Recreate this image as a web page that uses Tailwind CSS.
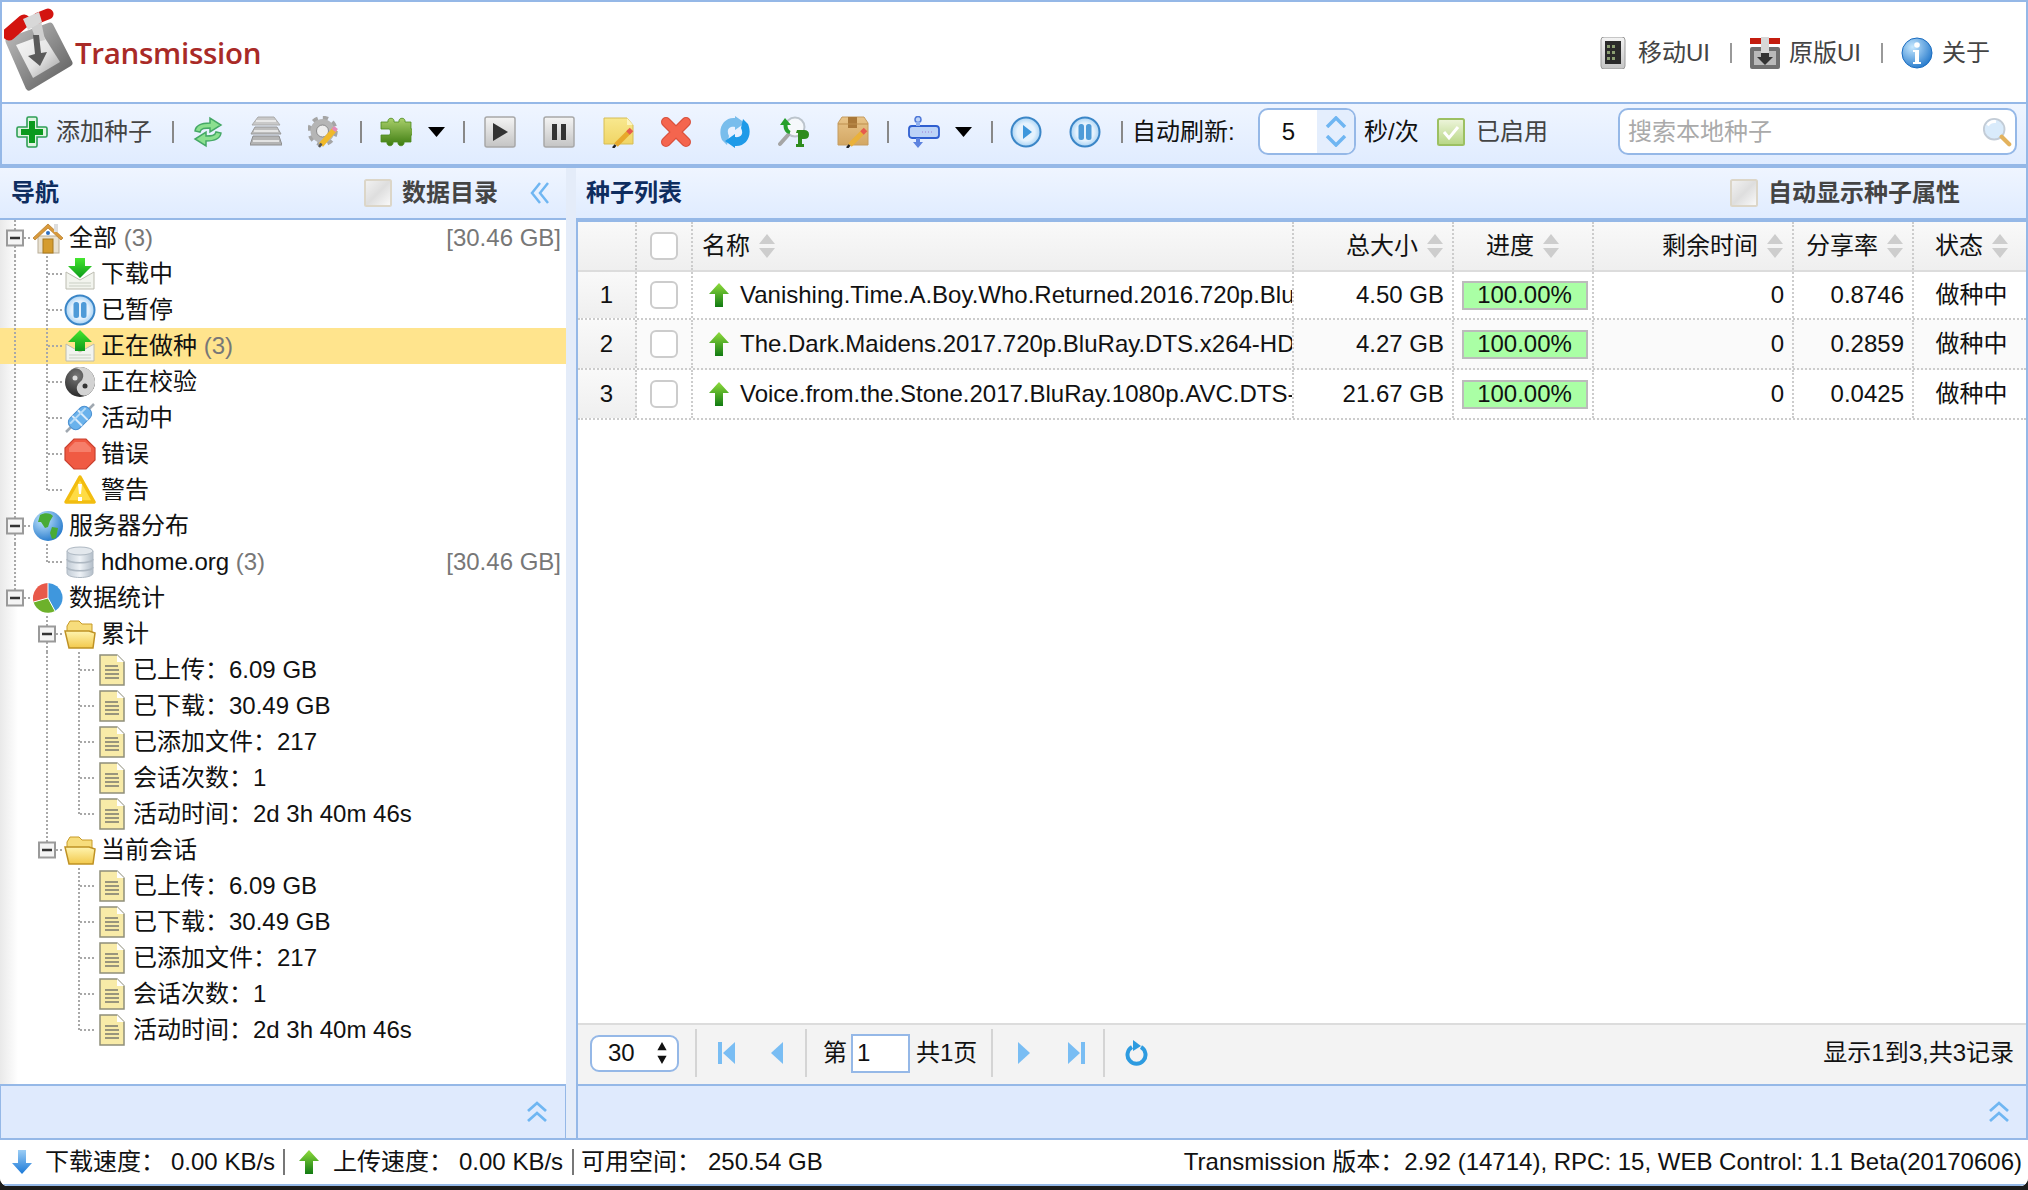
<!DOCTYPE html>
<html lang="zh-CN">
<head>
<meta charset="utf-8">
<title>Transmission</title>
<script src="https://cdn.jsdelivr.net/npm/@tailwindcss/browser@4"></script>
</head>
<body class="w-[2028px] h-[1190px] overflow-hidden whitespace-nowrap bg-[#1c1c1c] text-[24px] leading-none text-[#111] font-['Liberation_Sans','Noto_Sans_CJK_SC',sans-serif]">
<svg class="absolute w-0 h-0" aria-hidden="true">
<defs>
<linearGradient id="gGrey" x1="0" y1="0" x2="0" y2="1"><stop offset="0" stop-color="#f4f4f4"/><stop offset="1" stop-color="#c4c4c4"/></linearGradient>
<linearGradient id="gGreen" x1="0" y1="0" x2="0" y2="1"><stop offset="0" stop-color="#45e62f"/><stop offset="1" stop-color="#0d9a1a"/></linearGradient>
<linearGradient id="gUp" x1="0" y1="0" x2="0" y2="1"><stop offset="0" stop-color="#8fdc3c"/><stop offset="1" stop-color="#117a12"/></linearGradient>
<linearGradient id="gDown" x1="0" y1="0" x2="0" y2="1"><stop offset="0" stop-color="#9ccdf5"/><stop offset="1" stop-color="#1b79d8"/></linearGradient>
<linearGradient id="gPuzzle" x1="0" y1="0" x2="0" y2="1"><stop offset="0" stop-color="#a9cf6b"/><stop offset="1" stop-color="#3d7c10"/></linearGradient>
<linearGradient id="gBox" x1="0" y1="0" x2="0" y2="1"><stop offset="0" stop-color="#e8c489"/><stop offset="1" stop-color="#d3a764"/></linearGradient>
<linearGradient id="gNote" x1="0" y1="0" x2="0" y2="1"><stop offset="0" stop-color="#f8e88e"/><stop offset="1" stop-color="#f0d566"/></linearGradient>
<linearGradient id="gFolder" x1="0" y1="0" x2="0" y2="1"><stop offset="0" stop-color="#fff4b0"/><stop offset="1" stop-color="#f2c94c"/></linearGradient>
<linearGradient id="gDb" x1="0" y1="0" x2="1" y2="0"><stop offset="0" stop-color="#c2ccd6"/><stop offset="0.5" stop-color="#eef2f6"/><stop offset="1" stop-color="#b3bec9"/></linearGradient>
<linearGradient id="gMetal" x1="0" y1="0" x2="1" y2="1"><stop offset="0" stop-color="#f7f7f7"/><stop offset="0.55" stop-color="#e4e4e4"/><stop offset="1" stop-color="#9c9c9c"/></linearGradient>
<linearGradient id="gFrame" x1="0" y1="0" x2="1" y2="1"><stop offset="0" stop-color="#bcbcbc"/><stop offset="1" stop-color="#5d5d5d"/></linearGradient>
<linearGradient id="gCheck" x1="0" y1="0" x2="1" y2="1"><stop offset="0" stop-color="#f3f3f3"/><stop offset="0.5" stop-color="#dedede"/><stop offset="1" stop-color="#fbfbfb"/></linearGradient>
<linearGradient id="gChecked" x1="0" y1="0" x2="0" y2="1"><stop offset="0" stop-color="#eef5dc"/><stop offset="1" stop-color="#b7d684"/></linearGradient>
<radialGradient id="gGlobe" cx="0.35" cy="0.3" r="0.8"><stop offset="0" stop-color="#c6e8ff"/><stop offset="1" stop-color="#1a72c8"/></radialGradient>
<radialGradient id="gYin" cx="0.4" cy="0.3" r="0.8"><stop offset="0" stop-color="#777"/><stop offset="1" stop-color="#1e1e1e"/></radialGradient>
<radialGradient id="gRing" cx="0.5" cy="0.5" r="0.5"><stop offset="0.6" stop-color="#e5f2fd"/><stop offset="1" stop-color="#a9d3f4"/></radialGradient>

<symbol id="plus" viewBox="0 0 32 32"><path d="M11 2.500q0-1.500 1.500-1.500h7q1.500 0 1.500 1.500V11h8.500q1.500 0 1.500 1.500v7q0 1.500-1.500 1.500H21v8.500q0 1.500-1.500 1.500h-7q-1.500 0-1.500-1.500V21H2.500Q1 21 1 19.500v-7Q1 11 2.500 11H11z" fill="#dff3e2" stroke="#2e9f56" stroke-width="1.600"/><path d="M13 5h6v8h8v6h-8v8h-6v-8H5v-6h8z" fill="#0a9a1d"/></symbol>
<symbol id="sync" viewBox="0 0 32 32"><path d="M3 15C4 8 11 7 18 7V2l11 7-11 7v-4C13 12 9 12 8 16z" fill="#8be08f" stroke="#45a866" stroke-width="1.500"/><path d="M29 17c-1 7-8 8-15 8v5L3 23l11-7v4c5 0 9 0 10-4z" fill="#8be08f" stroke="#45a866" stroke-width="1.500"/></symbol>
<symbol id="layers" viewBox="0 0 32 32"><path d="M8 1h16l6 8H2z" fill="#c9c9c9" stroke="#aaa"/><path d="M5 11h22l4 7H1z" fill="#bdbdbd" stroke="#999"/><path d="M3 20h26l3 9H0z" fill="#b4b4b4" stroke="#8e8e8e"/><path d="M6 5h20M4 15h24M3 25h26" stroke="#f2f2f2" stroke-width="1.500"/></symbol>
<symbol id="gear" viewBox="0 0 32 32"><circle cx="14.500" cy="15" r="13" fill="none" stroke="#a5a5a5" stroke-width="4.500" stroke-dasharray="5.200 5"/><circle cx="14.500" cy="15" r="9" fill="none" stroke="#b5b5b5" stroke-width="6"/><circle cx="14.500" cy="15" r="6" fill="#eee" stroke="#888"/><path d="M13 29l14-16" stroke="#f0b92a" stroke-width="5.500"/><path d="M25.500 14.500l2.500-3" stroke="#e58ab8" stroke-width="5"/><path d="M11 31l2.500-3.500" stroke="#555" stroke-width="2.500"/></symbol>
<symbol id="puzzle" viewBox="0 0 32 32"><path d="M1 6h7c-1-5 7-5 6 0h5c-1-5 7-5 6 0h6v7c3-1 3 7 0 6v7h-7c1 5-7 5-6 0h-5c1 5-7 5-6 0H1v-7h8c2 0 2-6 0-6H1z" fill="url(#gPuzzle)" stroke="#4b8c1c" stroke-width=".8"/></symbol>
<symbol id="caret" viewBox="0 0 17 10"><path d="M0 0h17L8.500 10z" fill="#000"/></symbol>
<symbol id="playbtn" viewBox="0 0 32 32"><rect x="1" y="1" width="30" height="30" rx="2" fill="url(#gGrey)" stroke="#a8a8a8" stroke-width="1.500"/><path d="M9 7l15 9-15 9z" fill="#333"/></symbol>
<symbol id="pausebtn" viewBox="0 0 32 32"><rect x="1" y="1" width="30" height="30" rx="2" fill="url(#gGrey)" stroke="#a8a8a8" stroke-width="1.500"/><path d="M9 8h5v16H9zM18 8h5v16h-5z" fill="#333"/></symbol>
<symbol id="note" viewBox="0 0 32 32"><path d="M1 2h23l6 7v19H1z" fill="url(#gNote)" stroke="#d6bd55"/><path d="M24 2v7h6z" fill="#fdf5bf"/><path d="M13 29l14-14" stroke="#e7a92b" stroke-width="5"/><path d="M25 17l3.500-3.500" stroke="#e65a4e" stroke-width="5"/><path d="M10 32l2.500-3" stroke="#222" stroke-width="2.500"/></symbol>
<symbol id="cross" viewBox="0 0 32 32"><path d="M6 6l20 20M26 6L6 26" stroke="#d9503c" stroke-width="10" stroke-linecap="round"/><path d="M6 6l20 20M26 6L6 26" stroke="#f4654e" stroke-width="7.500" stroke-linecap="round"/></symbol>
<symbol id="reload" viewBox="0 0 32 32"><path d="M3 24C-2 12 5 1 16 2V0l10 7-10 7v-3C10 10 7 14 10 20l-2 9z" fill="#79bdec"/><path d="M29 8c5 12-2 23-13 22v2L6 25l10-7v3c6 1 9-3 6-9l2-9z" fill="#1e9ae8"/></symbol>
<symbol id="find" viewBox="0 0 32 32"><circle cx="17" cy="11" r="9.500" fill="#f5f8fb" stroke="#bcc4cc" stroke-width="2"/><path d="M10 19L2 28" stroke="#a5a5a5" stroke-width="4" stroke-linecap="round"/><path d="M7 2l-5 7h3.500c0 5 2 8 6 9l1-3c-2-1-3-3-3-6H13z" fill="#26a02d"/><path d="M19 14h7q5 0 5 4.500T26 23h-2v5h2v3h-8v-3h2V17h-2z" fill="#2e8c1e"/></symbol>
<symbol id="box" viewBox="0 0 32 32"><path d="M1 7l4-6h22l4 6v22H1z" fill="url(#gBox)" stroke="#c59c61"/><path d="M11 1h9v11h-9z" fill="#a97839"/><path d="M1 8h30" stroke="#bd8f4f"/><path d="M13 29l14-14" stroke="#eab13a" stroke-width="5"/><path d="M25 17l3.500-3.500" stroke="#e65a4e" stroke-width="5"/><path d="M10 32l2.500-3" stroke="#222" stroke-width="2.500"/></symbol>
<symbol id="drag" viewBox="0 0 32 32"><rect x="1" y="10" width="30" height="12" rx="3" fill="#bcd3f7" stroke="#2f5fd0" stroke-width="1.800"/><circle cx="10" cy="3.500" r="3" fill="#bcd3f7" stroke="#4f78d8" stroke-width="1.500"/><path d="M8 6h4v4H8z" fill="#8fb0ee"/><path d="M8 22h4v4h3l-5 6-5-6h3z" fill="#5d83df"/><path d="M14 16h12" stroke="#a07ad0" stroke-width="1" stroke-dasharray="1 2"/></symbol>
<symbol id="cplay" viewBox="0 0 32 32"><circle cx="16" cy="16" r="14.500" fill="url(#gRing)" stroke="#3b86c7" stroke-width="2"/><path d="M13 9l9 7-9 7z" fill="#3d97dc"/></symbol>
<symbol id="cpause" viewBox="0 0 32 32"><circle cx="16" cy="16" r="14.500" fill="url(#gRing)" stroke="#3b86c7" stroke-width="2"/><rect x="9.500" y="8" width="5.500" height="16" rx="2.500" fill="#4e9bd8"/><rect x="17" y="8" width="5.500" height="16" rx="2.500" fill="#4e9bd8"/></symbol>
<symbol id="phone" viewBox="0 0 32 32"><rect x="4" y="0" width="24" height="32" rx="3" fill="url(#gGrey)" stroke="#9a9a9a"/><rect x="8" y="4" width="16" height="23" fill="#2a2a2a"/><path d="M10 8h3v3h-3zM15 8h3v3h-3zM10 14h3v3h-3zM15 14h3v3h-3zM10 20h3v3h-3zM15 20h3v3h-3z" fill="#8b9e72"/></symbol>
<symbol id="orig" viewBox="0 0 32 32"><rect x="1" y="10" width="30" height="22" rx="2" fill="#6f6f6f"/><rect x="5" y="14" width="22" height="14" fill="#b9b9b9"/><path d="M1 1h30v6H1z" fill="#c41d0f"/><rect x="12" y="0" width="8" height="16" fill="#d7d7d7"/><path d="M12 16h8v4h4l-8 8-8-8h4z" fill="#333"/></symbol>
<symbol id="info" viewBox="0 0 32 32"><circle cx="16" cy="16" r="15" fill="url(#gGlobe)" stroke="#1a6cc0"/><circle cx="16" cy="8" r="2.800" fill="#fff"/><path d="M12 13h6v12h2v2h-8v-2h2v-10h-2z" fill="#fff"/></symbol>
<symbol id="mag" viewBox="0 0 32 32"><circle cx="13" cy="13" r="11" fill="#d9ebfb" stroke="#c3ccd6" stroke-width="2"/><path d="M6 9q3-5 9-4" stroke="#fff" stroke-width="3" fill="none"/><path d="M21 21l8 8" stroke="#e3b25c" stroke-width="4.500" stroke-linecap="round"/></symbol>
<symbol id="cb" viewBox="0 0 28 28"><rect x="1" y="1" width="26" height="26" rx="1.500" fill="url(#gCheck)" stroke="#dcd6c8" stroke-width="2"/></symbol>
<symbol id="cbon" viewBox="0 0 28 28"><rect x="1" y="1" width="26" height="26" rx="1.500" fill="url(#gChecked)" stroke="#9cc062" stroke-width="2"/><path d="M7 14l5 6 9-11" stroke="#fff" stroke-width="3" fill="none"/></symbol>
<symbol id="sort" viewBox="0 0 18 26"><path d="M9 1l8 10H1zM9 25l8-10H1z" fill="#cdcdcd"/></symbol>
<symbol id="dchev" viewBox="0 0 20 24"><path d="M10 2L2 12l8 10M18 2l-8 10 8 10" fill="none" stroke="#6fb6f2" stroke-width="2.500"/></symbol>
<symbol id="uchev" viewBox="0 0 22 22"><path d="M2 10L11 2l9 8M2 20l9-8 9 8" fill="none" stroke="#6fb6f2" stroke-width="2.800"/></symbol>
<symbol id="up" viewBox="0 0 22 26"><path d="M11 1l10 11h-6v13H7V12H1z" fill="url(#gUp)"/></symbol>
<symbol id="down" viewBox="0 0 22 26"><path d="M7 1h8v13h6L11 25 1 14h6z" fill="url(#gDown)"/></symbol>
<symbol id="pfirst" viewBox="0 0 20 24"><path d="M1 1h4v22H1zM18 1v22L6 12z" fill="#79bdf3"/></symbol>
<symbol id="pprev" viewBox="0 0 16 24"><path d="M14 1v22L2 12z" fill="#79bdf3"/></symbol>
<symbol id="pnext" viewBox="0 0 16 24"><path d="M2 1v22l12-11z" fill="#79bdf3"/></symbol>
<symbol id="plast" viewBox="0 0 20 24"><path d="M19 1h-4v22h4zM2 1v22l12-11z" fill="#79bdf3"/></symbol>
<symbol id="prefresh" viewBox="0 0 24 26"><path d="M8 7a9 9 0 1 0 9 0" fill="none" stroke="#2d9be0" stroke-width="4"/><path d="M9 0l8 6-8 5z" fill="#2d9be0"/></symbol>
<symbol id="home" viewBox="0 0 32 32"><rect x="6" y="14" width="21" height="17" fill="#e9e2d2" stroke="#b9ae98"/><path d="M1 16L16 2l15 14-2 2L16 6 3 18z" fill="#d99a3c" stroke="#b9802e" stroke-width=".8"/><rect x="22" y="2" width="4" height="8" fill="#ddd"/><circle cx="16" cy="11" r="2" fill="#2e6fc2"/><rect x="11" y="17" width="10" height="14" fill="#d59c2e" stroke="#a7781e"/></symbol>
<symbol id="dl" viewBox="0 0 32 32"><path d="M2 14l14 8 14-8v17H2z" fill="#f2f4ee" stroke="#bcbcb0"/><path d="M5 25h22M5 28h22" stroke="#c9cfc4"/><path d="M11 0h10v8h7L16 20 4 8h7z" fill="url(#gGreen)"/></symbol>
<symbol id="ul" viewBox="0 0 32 32"><path d="M2 14l14 8 14-8v17H2z" fill="#f2f4ee" stroke="#bcbcb0"/><path d="M5 25h22M5 28h22" stroke="#c9cfc4"/><path d="M16 0l12 12h-7v9H11v-9H4z" fill="url(#gGreen)"/></symbol>
<symbol id="yin" viewBox="0 0 32 32"><circle cx="16" cy="16" r="15" fill="url(#gYin)"/><path d="M16 1a15 15 0 0 1 0 30 7.500 7.500 0 0 1 0-15 7.500 7.500 0 0 0 0-15z" fill="#d3d3d3" transform="rotate(-35 16 16)"/><circle cx="11" cy="12" r="2.500" fill="#ddd"/><circle cx="21" cy="20" r="2.500" fill="#333"/></symbol>
<symbol id="capsule" viewBox="0 0 32 32"><path d="M2 30L30 2" stroke="#a0a8b0" stroke-width="2.500"/><g transform="rotate(-45 16 16)"><rect x="3" y="9" width="26" height="14" rx="6" fill="#6ab2ec" stroke="#4a8fd0"/><path d="M12 9v14M20 9v14" stroke="#dcecfa" stroke-width="2"/><path d="M5 13h22" stroke="#b9dcf8" stroke-width="2"/></g></symbol>
<symbol id="stop" viewBox="0 0 32 32"><path d="M10 1h12l9 9v12l-9 9H10l-9-9V10z" fill="#f05a43" stroke="#c9412f" stroke-width="1.200"/><path d="M11 4h10l6 6v4H5v-4z" fill="#f67e6a"/></symbol>
<symbol id="warn" viewBox="0 0 32 32"><path d="M16 3L30 28H2z" fill="#ffdc45" stroke="#f2bd10" stroke-width="3.500" stroke-linejoin="round"/><path d="M14 10h4l-1 10h-2zM14 23h4v4h-4z" fill="#fff"/></symbol>
<symbol id="globe" viewBox="0 0 32 32"><circle cx="16" cy="16" r="15" fill="url(#gGlobe)"/><path d="M8 5c5-3 11-2 13 1l-3 5-2 6-3 1-4-6-3 0zM20 17l6 1-2 10-4 1-2-6z" fill="#49ab36"/></symbol>
<symbol id="db" viewBox="0 0 32 32"><path d="M3 5v22c0 6 26 6 26 0V5z" fill="url(#gDb)" stroke="#aeb8c2"/><ellipse cx="16" cy="5" rx="13" ry="4" fill="#e3e8ed" stroke="#aeb8c2"/><path d="M3 13c0 5 26 5 26 0M3 21c0 5 26 5 26 0" fill="none" stroke="#aeb8c2" stroke-width="1.500"/></symbol>
<symbol id="pie" viewBox="0 0 32 32"><path d="M16 16V1a15 15 0 0 1 7 28z" fill="#3f97dd"/><path d="M16 16V1A15 15 0 0 0 1.500 20z" fill="#e8594a"/><path d="M16 16L1.500 20A15 15 0 0 0 23 29z" fill="#6db12b"/><path d="M16 1v15L1.500 20M16 16l7 13" stroke="#fff" fill="none"/></symbol>
<symbol id="folder" viewBox="0 0 32 32"><path d="M3 8l3-5h9l3 3h10v8H3z" fill="#f7dd7c" stroke="#c79a27"/><path d="M1 13h24l6 2-2 15H5z" fill="url(#gFolder)" stroke="#bf9224" stroke-width="1.500"/></symbol>
<symbol id="doc" viewBox="0 0 32 32"><path d="M4 1h17l7 7v23H4z" fill="#f8eba8" stroke="#8f8f7a" stroke-width="1.500"/><path d="M21 1v7h7z" fill="#fff"/><path d="M9 12h13M9 16h14M9 20h14M9 24h14" stroke="#7a7a6e" stroke-width="1.600"/></symbol>

<symbol id="tV" viewBox="0 0 32 36"><path d="M15 0v36" stroke="#a8a8a8" stroke-width="2" stroke-dasharray="2 2"/></symbol>
<symbol id="tT" viewBox="0 0 32 36"><path d="M15 0v36M16 18h16" stroke="#a8a8a8" stroke-width="2" stroke-dasharray="2 2"/></symbol>
<symbol id="tL" viewBox="0 0 32 36"><path d="M15 0v18M16 18h16" stroke="#a8a8a8" stroke-width="2" stroke-dasharray="2 2"/></symbol>
<symbol id="eF" viewBox="0 0 32 36"><path d="M15 0v10M15 26v10M24 18h8" stroke="#a8a8a8" stroke-width="2" stroke-dasharray="2 2"/><rect x="7" y="10.500" width="16" height="15" fill="#f4f4f4" stroke="#9a9a9a" stroke-width="2"/><path d="M10 18h10" stroke="#333" stroke-width="2.500"/></symbol>
<symbol id="eL" viewBox="0 0 32 36"><path d="M15 0v10M24 18h8" stroke="#a8a8a8" stroke-width="2" stroke-dasharray="2 2"/><rect x="7" y="10.500" width="16" height="15" fill="#f4f4f4" stroke="#9a9a9a" stroke-width="2"/><path d="M10 18h10" stroke="#333" stroke-width="2.500"/></symbol>
</defs>
</svg>

<div class="h-[1186px] flex flex-col bg-white rounded-b-[8px] overflow-hidden">
  <!-- header -->
  <header class="h-[102px] shrink-0 flex items-center border-t-2 border-x-2 border-[#95b8e7] bg-white">
    <svg viewBox="0 0 72 90" class="w-[72px] h-[90px] ml-[2px] blur-[0.5px] shrink-0">
      <path d="M5 34L46 19 65 56 25 80z" fill="url(#gFrame)" stroke="url(#gFrame)" stroke-width="7" stroke-linejoin="round"/>
      <path d="M12 38L39 28 56 55 29 71z" fill="url(#gMetal)"/>
      <path d="M24 12l12-3 5 24-8 2z" fill="#cfcfcf"/>
      <path d="M29 28l6 0 2 18 6-1-7 14-12-10 7-2z" fill="#5a5a5a"/>
      <path d="M5 27L20 14" stroke="#d3140f" stroke-width="13" stroke-linecap="round"/>
      <path d="M34 11L44 7" stroke="#d3140f" stroke-width="11" stroke-linecap="round"/>
      <path d="M19 12L35 5l3 10-14 8z" fill="#d8d8d8"/>
    </svg>
    <span class="-ml-[1px] text-[29.500px] font-semibold text-[#a92a27] font-['Open_Sans',sans-serif] tracking-[-0.3px] mt-[1px]">Transmission</span>
    <div class="ml-auto flex items-center text-[#444] mt-[2px]">
      <svg class="w-8 h-8 shrink-0"><use href="#phone"/></svg>
      <span class="ml-[9px] w-[72px]">移动UI</span>
      <span class="ml-[20px] w-[2px] h-[20px] bg-[#999]"></span>
      <svg class="ml-[17px] w-8 h-8 shrink-0"><use href="#orig"/></svg>
      <span class="ml-[8px] w-[72px]">原版UI</span>
      <span class="ml-[20px] w-[2px] h-[20px] bg-[#999]"></span>
      <svg class="ml-[18px] w-8 h-8 shrink-0"><use href="#info"/></svg>
      <span class="ml-[9px] w-[48px]">关于</span>
      <span class="w-[36px]"></span>
    </div>
  </header>

  <!-- toolbar -->
  <nav class="h-[66px] shrink-0 flex items-center pb-[5px] border-t-2 border-b-4 border-x-2 border-[#95b8e7] bg-linear-to-b from-[#eff5ff] to-[#e0ecff] text-[#444]">
    <svg class="ml-[14px] w-8 h-8 shrink-0"><use href="#plus"/></svg>
    <span class="ml-[8px] w-[96px] shrink-0">添加种子</span>
    <span class="ml-[20px] w-[2px] h-[22px] bg-[#888] shrink-0"></span>
    <svg class="ml-[18px] w-8 h-8 shrink-0"><use href="#sync"/></svg>
    <svg class="ml-[26px] w-8 h-8 shrink-0"><use href="#layers"/></svg>
    <svg class="ml-[26px] w-8 h-8 shrink-0"><use href="#gear"/></svg>
    <span class="ml-[20px] w-[2px] h-[22px] bg-[#888] shrink-0"></span>
    <svg class="ml-[18px] w-8 h-8 shrink-0"><use href="#puzzle"/></svg>
    <svg class="ml-[16px] w-[17px] h-[10px] shrink-0"><use href="#caret"/></svg>
    <span class="ml-[18px] w-[2px] h-[22px] bg-[#888] shrink-0"></span>
    <svg class="ml-[19px] w-8 h-8 shrink-0"><use href="#playbtn"/></svg>
    <svg class="ml-[27px] w-8 h-8 shrink-0"><use href="#pausebtn"/></svg>
    <svg class="ml-[28px] w-8 h-8 shrink-0"><use href="#note"/></svg>
    <svg class="ml-[25px] w-8 h-8 shrink-0"><use href="#cross"/></svg>
    <svg class="ml-[27px] w-8 h-8 shrink-0"><use href="#reload"/></svg>
    <svg class="ml-[27px] w-8 h-8 shrink-0"><use href="#find"/></svg>
    <svg class="ml-[27px] w-8 h-8 shrink-0"><use href="#box"/></svg>
    <span class="ml-[18px] w-[2px] h-[22px] bg-[#888] shrink-0"></span>
    <svg class="ml-[19px] w-8 h-8 shrink-0"><use href="#drag"/></svg>
    <svg class="ml-[15px] w-[17px] h-[10px] shrink-0"><use href="#caret"/></svg>
    <span class="ml-[19px] w-[2px] h-[22px] bg-[#888] shrink-0"></span>
    <svg class="ml-[17px] w-8 h-8 shrink-0"><use href="#cplay"/></svg>
    <svg class="ml-[27px] w-8 h-8 shrink-0"><use href="#cpause"/></svg>
    <span class="ml-[20px] w-[2px] h-[22px] bg-[#888] shrink-0"></span>
    <span class="ml-[9px] w-[103px] shrink-0 text-[#111]">自动刷新:</span>
    <div class="ml-[23px] w-[98px] h-[47px] shrink-0 flex rounded-[10px] border-2 border-[#95b8e7] bg-white overflow-hidden">
      <span class="flex-1 flex items-center justify-center text-[#111]">5</span>
      <div class="w-[37px] flex flex-col items-center justify-center gap-[7px] bg-[#e4eefd]">
        <svg viewBox="0 0 22 12" class="w-[22px] h-[12px]"><path d="M2 11L11 2l9 9" fill="none" stroke="#6fb6f2" stroke-width="3.500"/></svg>
        <svg viewBox="0 0 22 12" class="w-[22px] h-[12px]"><path d="M2 1l9 9 9-9" fill="none" stroke="#6fb6f2" stroke-width="3.500"/></svg>
      </div>
    </div>
    <span class="ml-[8px] w-[53px] shrink-0 text-[#111]">秒/次</span>
    <svg class="ml-[20px] w-7 h-7 shrink-0"><use href="#cbon"/></svg>
    <span class="ml-[11px] w-[72px] shrink-0">已启用</span>
    <div class="ml-[70px] w-[399px] h-[47px] shrink-0 flex items-center justify-between rounded-[10px] border-2 border-[#95b8e7] bg-white pl-[8px] pr-[3px] text-[#aaa]">
      <span>搜索本地种子</span>
      <svg class="w-[30px] h-[30px]"><use href="#mag"/></svg>
    </div>
  </nav>

  <main class="flex-1 flex min-h-0 bg-[#e4ecf9]">
    <!-- left panel -->
    <section class="w-[566px] shrink-0 flex flex-col">
      <div class="h-[52px] shrink-0 flex items-center border-b-2 border-[#95b8e7] bg-linear-to-b from-[#eff5ff] to-[#e0ecff]">
        <span class="ml-[11px] font-bold text-[#0e2d5f]">导航</span>
        <svg class="ml-auto w-7 h-7 shrink-0"><use href="#cb"/></svg>
        <span class="ml-[10px] w-[97px] font-bold text-[#444]">数据目录</span>
        <svg class="ml-[31px] w-[20px] h-[24px] mr-[16px] shrink-0"><use href="#dchev"/></svg>
      </div>
      <div class="flex-1 min-h-0 bg-white bg-[linear-gradient(90deg,#e9e9e9,#fff_18px)]">
        <div class="h-9 flex items-center"><svg class="w-8 h-9"><use href="#eF"/></svg><svg class="w-8 h-8"><use href="#home"/></svg><span class="ml-[5px]">全部 <span class="text-[#777]">(3)</span></span><span class="ml-auto mr-[5px] text-[#777]">[30.46 GB]</span></div>
        <div class="h-9 flex items-center"><svg class="w-8 h-9"><use href="#tV"/></svg><svg class="w-8 h-9"><use href="#tT"/></svg><svg class="w-8 h-8"><use href="#dl"/></svg><span class="ml-[5px]">下载中</span></div>
        <div class="h-9 flex items-center"><svg class="w-8 h-9"><use href="#tV"/></svg><svg class="w-8 h-9"><use href="#tT"/></svg><svg class="w-8 h-8"><use href="#cpause"/></svg><span class="ml-[5px]">已暂停</span></div>
        <div class="h-9 flex items-center bg-[#ffe48d]"><svg class="w-8 h-9"><use href="#tV"/></svg><svg class="w-8 h-9"><use href="#tT"/></svg><svg class="w-8 h-8"><use href="#ul"/></svg><span class="ml-[5px]">正在做种 <span class="text-[#777]">(3)</span></span></div>
        <div class="h-9 flex items-center"><svg class="w-8 h-9"><use href="#tV"/></svg><svg class="w-8 h-9"><use href="#tT"/></svg><svg class="w-8 h-8"><use href="#yin"/></svg><span class="ml-[5px]">正在校验</span></div>
        <div class="h-9 flex items-center"><svg class="w-8 h-9"><use href="#tV"/></svg><svg class="w-8 h-9"><use href="#tT"/></svg><svg class="w-8 h-8"><use href="#capsule"/></svg><span class="ml-[5px]">活动中</span></div>
        <div class="h-9 flex items-center"><svg class="w-8 h-9"><use href="#tV"/></svg><svg class="w-8 h-9"><use href="#tT"/></svg><svg class="w-8 h-8"><use href="#stop"/></svg><span class="ml-[5px]">错误</span></div>
        <div class="h-9 flex items-center"><svg class="w-8 h-9"><use href="#tV"/></svg><svg class="w-8 h-9"><use href="#tL"/></svg><svg class="w-8 h-8"><use href="#warn"/></svg><span class="ml-[5px]">警告</span></div>
        <div class="h-9 flex items-center"><svg class="w-8 h-9"><use href="#eF"/></svg><svg class="w-8 h-8"><use href="#globe"/></svg><span class="ml-[5px]">服务器分布</span></div>
        <div class="h-9 flex items-center"><svg class="w-8 h-9"><use href="#tV"/></svg><svg class="w-8 h-9"><use href="#tL"/></svg><svg class="w-8 h-8"><use href="#db"/></svg><span class="ml-[5px]">hdhome.org <span class="text-[#777]">(3)</span></span><span class="ml-auto mr-[5px] text-[#777]">[30.46 GB]</span></div>
        <div class="h-9 flex items-center"><svg class="w-8 h-9"><use href="#eL"/></svg><svg class="w-8 h-8"><use href="#pie"/></svg><span class="ml-[5px]">数据统计</span></div>
        <div class="h-9 flex items-center"><span class="w-8"></span><svg class="w-8 h-9"><use href="#eF"/></svg><svg class="w-8 h-8"><use href="#folder"/></svg><span class="ml-[5px]">累计</span></div>
        <div class="h-9 flex items-center"><span class="w-8"></span><svg class="w-8 h-9"><use href="#tV"/></svg><svg class="w-8 h-9"><use href="#tT"/></svg><svg class="w-8 h-8"><use href="#doc"/></svg><span class="ml-[5px]">已上传：6.09 GB</span></div>
        <div class="h-9 flex items-center"><span class="w-8"></span><svg class="w-8 h-9"><use href="#tV"/></svg><svg class="w-8 h-9"><use href="#tT"/></svg><svg class="w-8 h-8"><use href="#doc"/></svg><span class="ml-[5px]">已下载：30.49 GB</span></div>
        <div class="h-9 flex items-center"><span class="w-8"></span><svg class="w-8 h-9"><use href="#tV"/></svg><svg class="w-8 h-9"><use href="#tT"/></svg><svg class="w-8 h-8"><use href="#doc"/></svg><span class="ml-[5px]">已添加文件：217</span></div>
        <div class="h-9 flex items-center"><span class="w-8"></span><svg class="w-8 h-9"><use href="#tV"/></svg><svg class="w-8 h-9"><use href="#tT"/></svg><svg class="w-8 h-8"><use href="#doc"/></svg><span class="ml-[5px]">会话次数：1</span></div>
        <div class="h-9 flex items-center"><span class="w-8"></span><svg class="w-8 h-9"><use href="#tV"/></svg><svg class="w-8 h-9"><use href="#tL"/></svg><svg class="w-8 h-8"><use href="#doc"/></svg><span class="ml-[5px]">活动时间：2d 3h 40m 46s</span></div>
        <div class="h-9 flex items-center"><span class="w-8"></span><svg class="w-8 h-9"><use href="#eL"/></svg><svg class="w-8 h-8"><use href="#folder"/></svg><span class="ml-[5px]">当前会话</span></div>
        <div class="h-9 flex items-center"><span class="w-16"></span><svg class="w-8 h-9"><use href="#tT"/></svg><svg class="w-8 h-8"><use href="#doc"/></svg><span class="ml-[5px]">已上传：6.09 GB</span></div>
        <div class="h-9 flex items-center"><span class="w-16"></span><svg class="w-8 h-9"><use href="#tT"/></svg><svg class="w-8 h-8"><use href="#doc"/></svg><span class="ml-[5px]">已下载：30.49 GB</span></div>
        <div class="h-9 flex items-center"><span class="w-16"></span><svg class="w-8 h-9"><use href="#tT"/></svg><svg class="w-8 h-8"><use href="#doc"/></svg><span class="ml-[5px]">已添加文件：217</span></div>
        <div class="h-9 flex items-center"><span class="w-16"></span><svg class="w-8 h-9"><use href="#tT"/></svg><svg class="w-8 h-8"><use href="#doc"/></svg><span class="ml-[5px]">会话次数：1</span></div>
        <div class="h-9 flex items-center"><span class="w-16"></span><svg class="w-8 h-9"><use href="#tL"/></svg><svg class="w-8 h-8"><use href="#doc"/></svg><span class="ml-[5px]">活动时间：2d 3h 40m 46s</span></div>
      </div>
      <div class="h-[54px] shrink-0 flex items-center justify-end border-t-2 border-x border-[#95b8e7] bg-[#dfeafd] pr-[17px]">
        <svg class="w-[22px] h-[22px]"><use href="#uchev"/></svg>
      </div>
    </section>

    <!-- right panel -->
    <section class="ml-[10px] flex-1 min-w-0 flex flex-col border-r-2 border-[#95b8e7]">
      <div class="h-[54px] shrink-0 flex items-center border-b-4 border-[#95b8e7] bg-linear-to-b from-[#eff5ff] to-[#e0ecff]">
        <span class="ml-[10px] font-bold text-[#0e2d5f]">种子列表</span>
        <svg class="ml-auto w-7 h-7 shrink-0"><use href="#cb"/></svg>
        <span class="ml-[10px] mr-[66px] font-bold text-[#444]">自动显示种子属性</span>
      </div>
      <div class="flex-1 min-h-0 flex flex-col border-l-2 border-[#95b8e7] bg-white">
        <div class="h-[50px] shrink-0 grid grid-cols-[59px_56px_601px_160px_140px_200px_120px_1fr] border-b-2 border-[#dcdcdc] bg-linear-to-b from-[#f9f9f9] to-[#efefef]">
          <div class="border-r-2 border-dotted border-[#ccc]"></div>
          <div class="flex items-center justify-center border-r-2 border-dotted border-[#ccc]"><span class="w-7 h-7 rounded-md border-2 border-[#ccc] bg-white"></span></div>
          <div class="flex items-center pl-[9px] border-r-2 border-dotted border-[#ccc]">名称<svg class="ml-[8px] w-[18px] h-[26px]"><use href="#sort"/></svg></div>
          <div class="flex items-center justify-end pr-[8px] border-r-2 border-dotted border-[#ccc]">总大小<svg class="ml-[8px] w-[18px] h-[26px]"><use href="#sort"/></svg></div>
          <div class="flex items-center justify-center border-r-2 border-dotted border-[#ccc]">进度<svg class="ml-[8px] w-[18px] h-[26px]"><use href="#sort"/></svg></div>
          <div class="flex items-center justify-end pr-[8px] border-r-2 border-dotted border-[#ccc]">剩余时间<svg class="ml-[8px] w-[18px] h-[26px]"><use href="#sort"/></svg></div>
          <div class="flex items-center justify-end pr-[8px] border-r-2 border-dotted border-[#ccc]">分享率<svg class="ml-[8px] w-[18px] h-[26px]"><use href="#sort"/></svg></div>
          <div class="flex items-center justify-center pl-[4px]">状态<svg class="ml-[8px] w-[18px] h-[26px]"><use href="#sort"/></svg></div>
        </div>
        <div class="h-[48px] shrink-0 grid grid-cols-[59px_56px_601px_160px_140px_200px_120px_1fr] border-b-2 border-dotted border-[#ccc]">
          <div class="flex items-center justify-center border-r-2 border-dotted border-[#ccc] bg-linear-to-b from-[#f9f9f9] to-[#efefef]">1</div>
          <div class="flex items-center justify-center border-r-2 border-dotted border-[#ccc]"><span class="w-7 h-7 rounded-md border-2 border-[#ccc] bg-white"></span></div>
          <div class="flex items-center pl-[15px] border-r-2 border-dotted border-[#ccc] overflow-hidden"><svg class="w-[22px] h-[26px] shrink-0"><use href="#up"/></svg><span class="ml-[10px]">Vanishing.Time.A.Boy.Who.Returned.2016.720p.Blu</span></div>
          <div class="flex items-center justify-end pr-[8px] border-r-2 border-dotted border-[#ccc]">4.50 GB</div>
          <div class="flex items-center justify-center pl-[3px] border-r-2 border-dotted border-[#ccc]"><div class="w-[126px] h-[29px] flex items-center justify-center bg-[#aaffa5] border-2 border-[#bbb]">100.00%</div></div>
          <div class="flex items-center justify-end pr-[8px] border-r-2 border-dotted border-[#ccc]">0</div>
          <div class="flex items-center justify-end pr-[8px] border-r-2 border-dotted border-[#ccc]">0.8746</div>
          <div class="flex items-center justify-center pl-[3px]">做种中</div>
        </div>
        <div class="h-[50px] shrink-0 grid grid-cols-[59px_56px_601px_160px_140px_200px_120px_1fr] border-b-2 border-dotted border-[#ccc] bg-[#fafafa]">
          <div class="flex items-center justify-center border-r-2 border-dotted border-[#ccc] bg-linear-to-b from-[#f9f9f9] to-[#efefef]">2</div>
          <div class="flex items-center justify-center border-r-2 border-dotted border-[#ccc]"><span class="w-7 h-7 rounded-md border-2 border-[#ccc] bg-white"></span></div>
          <div class="flex items-center pl-[15px] border-r-2 border-dotted border-[#ccc] overflow-hidden"><svg class="w-[22px] h-[26px] shrink-0"><use href="#up"/></svg><span class="ml-[10px]">The.Dark.Maidens.2017.720p.BluRay.DTS.x264-HD</span></div>
          <div class="flex items-center justify-end pr-[8px] border-r-2 border-dotted border-[#ccc]">4.27 GB</div>
          <div class="flex items-center justify-center pl-[3px] border-r-2 border-dotted border-[#ccc]"><div class="w-[126px] h-[29px] flex items-center justify-center bg-[#aaffa5] border-2 border-[#bbb]">100.00%</div></div>
          <div class="flex items-center justify-end pr-[8px] border-r-2 border-dotted border-[#ccc]">0</div>
          <div class="flex items-center justify-end pr-[8px] border-r-2 border-dotted border-[#ccc]">0.2859</div>
          <div class="flex items-center justify-center pl-[3px]">做种中</div>
        </div>
        <div class="h-[50px] shrink-0 grid grid-cols-[59px_56px_601px_160px_140px_200px_120px_1fr] border-b-2 border-dotted border-[#ccc]">
          <div class="flex items-center justify-center border-r-2 border-dotted border-[#ccc] bg-linear-to-b from-[#f9f9f9] to-[#efefef]">3</div>
          <div class="flex items-center justify-center border-r-2 border-dotted border-[#ccc]"><span class="w-7 h-7 rounded-md border-2 border-[#ccc] bg-white"></span></div>
          <div class="flex items-center pl-[15px] border-r-2 border-dotted border-[#ccc] overflow-hidden"><svg class="w-[22px] h-[26px] shrink-0"><use href="#up"/></svg><span class="ml-[10px]">Voice.from.the.Stone.2017.BluRay.1080p.AVC.DTS-</span></div>
          <div class="flex items-center justify-end pr-[8px] border-r-2 border-dotted border-[#ccc]">21.67 GB</div>
          <div class="flex items-center justify-center pl-[3px] border-r-2 border-dotted border-[#ccc]"><div class="w-[126px] h-[29px] flex items-center justify-center bg-[#aaffa5] border-2 border-[#bbb]">100.00%</div></div>
          <div class="flex items-center justify-end pr-[8px] border-r-2 border-dotted border-[#ccc]">0</div>
          <div class="flex items-center justify-end pr-[8px] border-r-2 border-dotted border-[#ccc]">0.0425</div>
          <div class="flex items-center justify-center pl-[3px]">做种中</div>
        </div>
        <div class="flex-1"></div>
        <!-- pager -->
        <div class="h-[61px] shrink-0 flex items-center pb-[3px] border-t-2 border-[#dcdcdc] bg-[#f3f3f3]">
          <div class="ml-[12px] w-[89px] h-[37px] shrink-0 flex items-center justify-between rounded-[9px] border-2 border-[#95b8e7] bg-white pl-[16px] pr-[9px]">
            <span>30</span>
            <svg viewBox="0 0 12 26" class="w-[12px] h-[24px]"><path d="M6 1l5 9H1zM6 25l5-9H1z" fill="#111"/></svg>
          </div>
          <span class="ml-[16px] w-[2px] h-[48px] bg-[#d4d4d4] shrink-0"></span>
          <svg class="ml-[20px] w-[20px] h-[24px] shrink-0"><use href="#pfirst"/></svg>
          <svg class="ml-[32px] w-[16px] h-[24px] shrink-0"><use href="#pprev"/></svg>
          <span class="ml-[20px] w-[2px] h-[48px] bg-[#d4d4d4] shrink-0"></span>
          <span class="ml-[16px] w-[24px] shrink-0">第</span>
          <div class="ml-[4px] w-[59px] h-[39px] shrink-0 flex items-center border-2 border-[#95b8e7] bg-white pl-[4px]">1</div>
          <span class="ml-[6px] w-[62px] shrink-0">共1页</span>
          <span class="ml-[13px] w-[2px] h-[48px] bg-[#d4d4d4] shrink-0"></span>
          <svg class="ml-[23px] w-[16px] h-[24px] shrink-0"><use href="#pnext"/></svg>
          <svg class="ml-[34px] w-[20px] h-[24px] shrink-0"><use href="#plast"/></svg>
          <span class="ml-[17px] w-[2px] h-[48px] bg-[#d4d4d4] shrink-0"></span>
          <svg class="ml-[19px] w-[24px] h-[26px] shrink-0"><use href="#prefresh"/></svg>
          <span class="ml-auto mr-[12px]">显示1到3,共3记录</span>
        </div>
      </div>
      <div class="h-[54px] shrink-0 flex items-center justify-end border-t-2 border-l-2 border-[#95b8e7] bg-[#dfeafd] pr-[16px]">
        <svg class="w-[22px] h-[22px]"><use href="#uchev"/></svg>
      </div>
    </section>
  </main>

  <!-- status bar -->
  <footer class="h-[48px] shrink-0 flex items-center border-t-2 border-b-2 border-[#95b8e7] bg-white">
    <svg class="ml-[11px] w-[22px] h-[26px] shrink-0"><use href="#down"/></svg>
    <span class="ml-[12px] w-[126px] shrink-0">下载速度：</span>
    <span class="w-[104px] shrink-0">0.00 KB/s</span>
    <span class="ml-[8px] w-[2px] h-[26px] bg-[#777] shrink-0"></span>
    <svg class="ml-[13px] w-[22px] h-[26px] shrink-0"><use href="#up"/></svg>
    <span class="ml-[13px] w-[126px] shrink-0">上传速度：</span>
    <span class="w-[104px] shrink-0">0.00 KB/s</span>
    <span class="ml-[9px] w-[2px] h-[26px] bg-[#777] shrink-0"></span>
    <span class="ml-[7px] w-[127px] shrink-0">可用空间：</span>
    <span class="shrink-0">250.54 GB</span>
    <span class="ml-auto mr-[6px]">Transmission 版本：2.92 (14714), RPC: 15, WEB Control: 1.1 Beta(20170606)</span>
  </footer>
</div>
</body>
</html>
